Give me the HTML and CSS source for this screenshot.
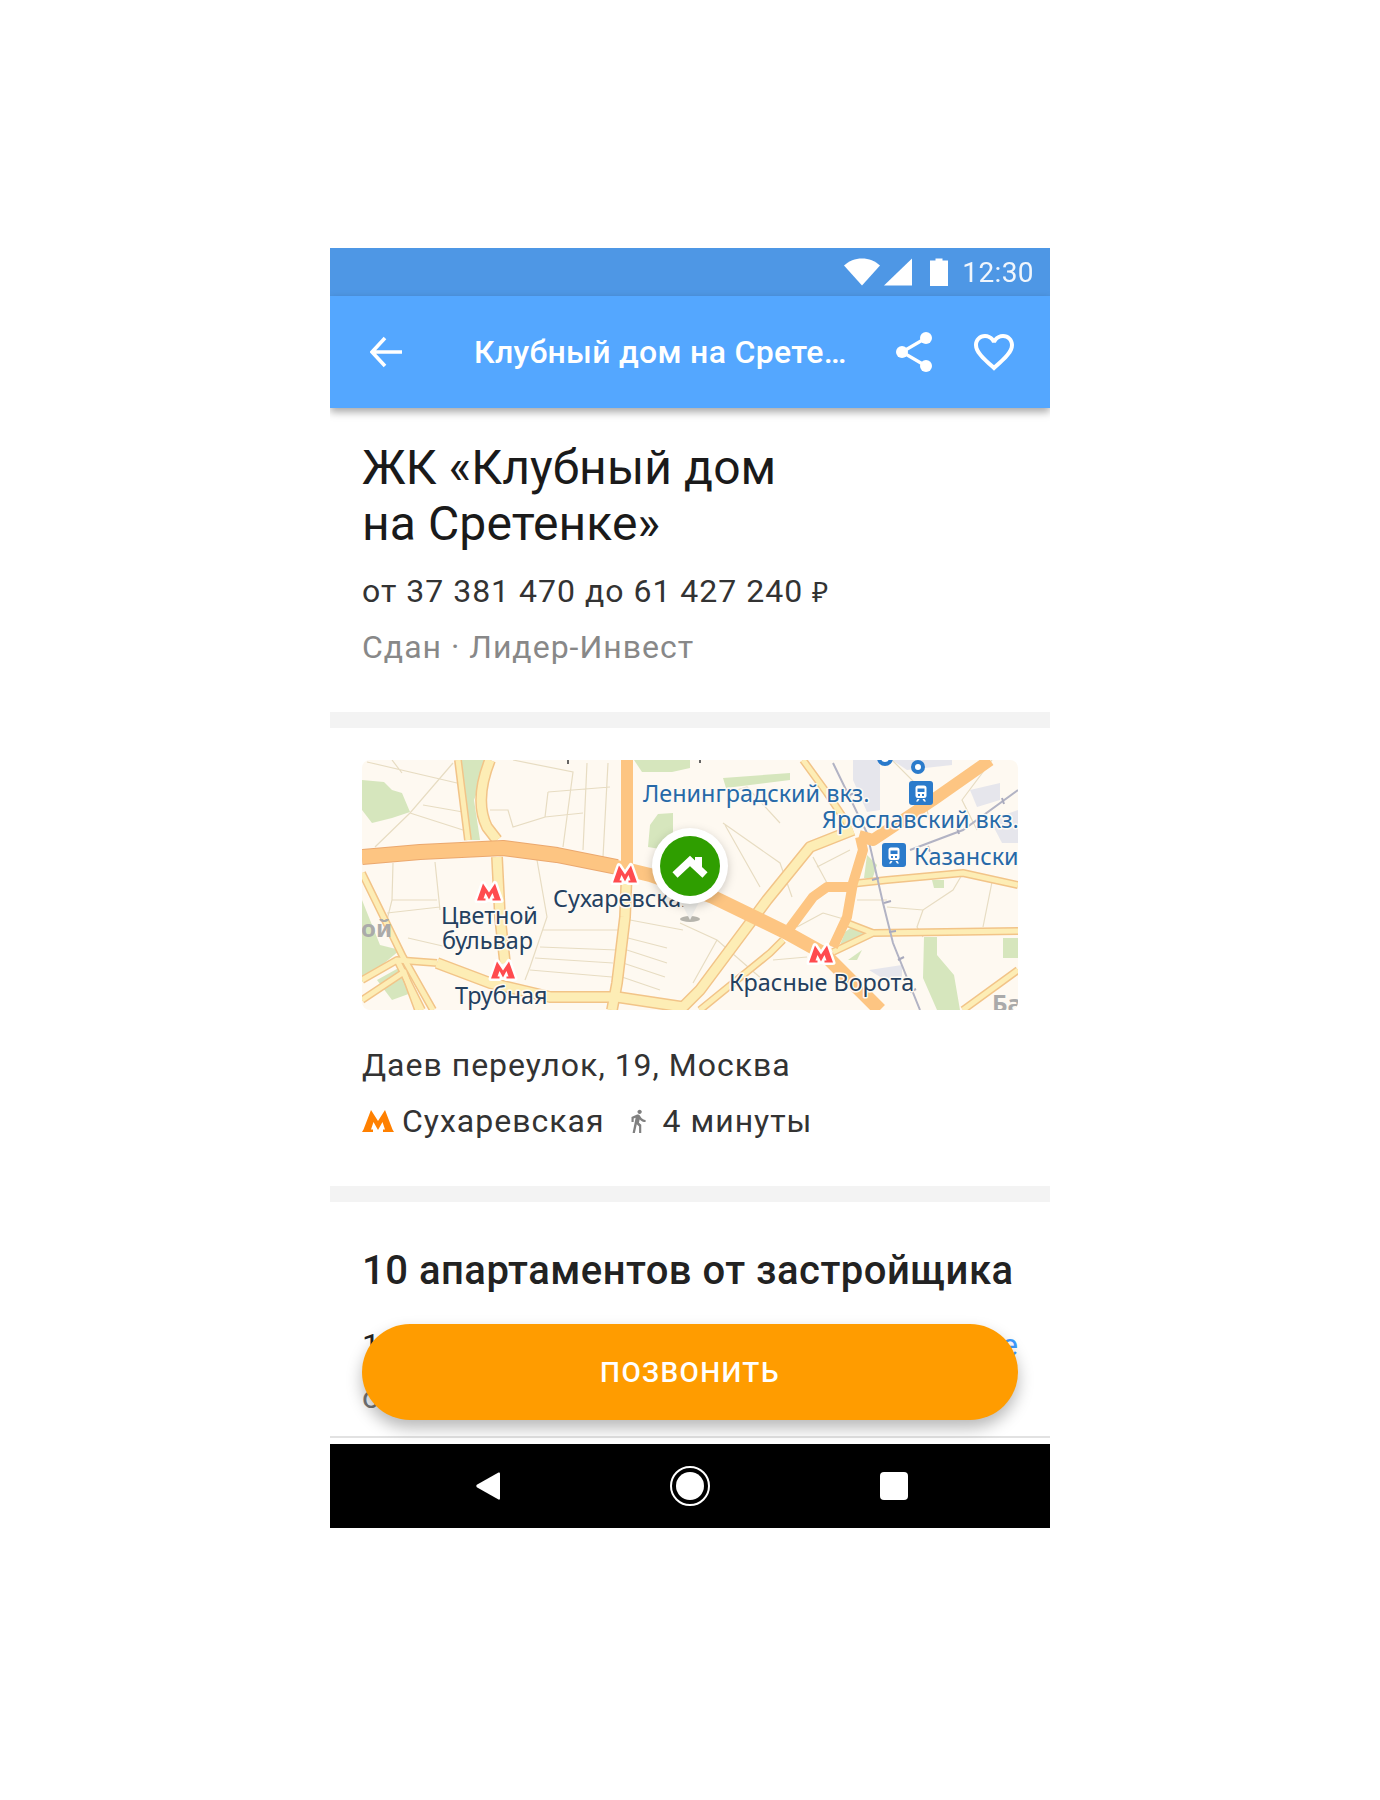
FILE: index.html
```html
<!DOCTYPE html>
<html lang="ru">
<head>
<meta charset="utf-8">
<title>ЖК «Клубный дом на Сретенке»</title>
<link rel="stylesheet" href="styles.css">
</head>
<body>
<div class="phone">
  <div class="status">
    <svg class="st-wifi" width="36" height="28" viewBox="0 0 36 28"><path d="M0 7.500C5 3 11 .5 18 .5S31 3 36 7.500L18 27.500z"/></svg>
    <svg class="st-signal" width="28" height="28" viewBox="0 0 28 28"><path d="M28 0.500V27.500H0z"/></svg>
    <svg class="st-batt" width="18" height="28" viewBox="0 0 18 28"><path d="M0 2.500h5.500V.5h7v2H18v25.500H0z"/></svg>
    <span class="st-time">12:30</span>
  </div>
  <header class="appbar">
    <svg class="ab-back" width="32" height="32" viewBox="0 0 32 32"><path d="M32 16H2M15 2L2 16l13 14" fill="none" stroke="#fff" stroke-width="3.600"/></svg>
    <div class="ab-title">Клубный дом на Срете…</div>
    <svg class="ab-share" width="36" height="40" viewBox="0 0 36 40"><g fill="#fff"><circle cx="30" cy="6" r="6"/><circle cx="6" cy="20" r="6"/><circle cx="30" cy="34" r="6"/></g><path d="M30 6L6 20l24 14" fill="none" stroke="#fff" stroke-width="3.200"/></svg>
    <svg class="ab-heart" width="48" height="48" viewBox="0 0 24 24"><path fill="#fff" d="M16.500 3c-1.740 0-3.410.81-4.500 2.090C10.910 3.810 9.240 3 7.500 3 4.420 3 2 5.420 2 8.500c0 3.780 3.400 6.860 8.550 11.540L12 21.350l1.450-1.320C18.600 15.360 22 12.280 22 8.500 22 5.420 19.580 3 16.500 3zm-4.400 15.550l-.1.100-.1-.1C7.140 14.240 4 11.390 4 8.500 4 6.500 5.500 5 7.500 5c1.540 0 3.040.99 3.570 2.360h1.870C13.460 5.990 14.960 5 16.500 5c2 0 3.500 1.500 3.500 3.500 0 2.890-3.140 5.740-7.900 10.050z"/></svg>
  </header>
  <main class="content">
    <section class="head">
      <h1 class="title">ЖК «Клубный дом<br>на Сретенке»</h1>
      <div class="price">от 37 381 470 до 61 427 240 <span class="rub">₽</span></div>
      <div class="sub">Сдан · Лидер-Инвест</div>
    </section>
    <section class="loc">
      <svg class="map" width="656" height="250" viewBox="0 0 656 250">
        <defs>
          <g id="m"><path d="M-12 8.500L-6 -8.500L0 0.500L6 -8.500L12 8.500H3.500V6.500H5.500L3.500 1L0 7.500L-3.500 1L-5.500 6.500H-3.500V8.500z"/></g>
          <g id="train"><rect x="0" y="0" width="24" height="24" rx="3"/><path class="tr" d="M6.500 15V7q0-2.500 2.500-2.500h6q2.500 0 2.500 2.500v8q0 2-2.500 2H9q-2.500 0-2.500-2zM8.500 7.500v3.500h7V7.500zM9 13h2v2H9zM13 13h2v2h-2zM8.500 18h2l-1.500 2.500H7zM15.500 18h-2l1.500 2.500H17z"/></g>
          <g id="y10"><path d="M128 0Q112 40 125 67L135 80"/><path d="M135 97L138 157L143 203"/><path d="M265 107L263 157L255 223L250 250"/><path d="M491 70L448 87L405 140L385 167L338 230L318 250"/><path d="M75 203L128 223L188 237L255 237L321 247"/></g>
          <g id="y6"><path d="M96 0L106 80"/><path d="M0 113L41 197L71 250"/><path d="M0 220L35 200L75 203"/><path d="M0 240L42 212L56 250"/><path d="M488 124L525 120L601 113L656 125"/><path d="M471 192L511 173L656 171"/><path d="M485 163L511 173"/><path d="M441 0L465 33L487 66"/><path d="M601 250L656 210"/><path d="M421 180L408 193L338 250"/><path d="M35 200L60 250"/></g>
        </defs>
        <rect class="bg" width="656" height="250"/>
        <g class="green">
          <path d="M0 20L22 22L30 30L40 33L48 52L30 58L10 63L0 50z"/>
          <path d="M98 0H128L112 40L118 80H106z"/>
          <path d="M272 0H328V8L310 12H280z"/>
          <path d="M296 54L311 53L311 75L304 90L286 87L288 65z"/>
          <path d="M361 18L428 13V20L364 28z"/>
          <path d="M562 177H575V195L592 215L598 250H575L561 218z"/>
          <path d="M641 178H656V198H641z"/>
          <path d="M570 120H582V128H572z"/>
          <path d="M486 200L500 190L495 200z"/>
          <path d="M483 172L490 167L505 175L478 185z"/>
          <path d="M505 95L515 105L510 120L502 118z"/>
          <path d="M0 140L18 185L38 190L8 215L0 222z"/>
          <path d="M15 220L42 205L52 232L30 240z"/>
          <path d="M138 195L143 195L144 203L138 202z"/>
        </g>
        <g class="bld">
          <path d="M491 0H518L518 50L505 52L491 20z"/>
          <path d="M608 30L638 23V40L615 47z"/>
          <path d="M628 60L656 50V83H640z"/>
          <path d="M507 210L540 205V218H520z"/>
          <path d="M530 0H590V5L545 10z"/>
        </g>
        <path class="st" d="M5 2L95 23M40 13L30 0M91 3L48 53L13 87M48 53L101 70M61 45L101 52M151 0L211 12L201 87M225 3L221 90M246 3L241 97M186 32L248 27M186 32L183 57L151 67L146 50L128 50M183 57L221 53M31 103L30 140L25 160M73 102L78 150M30 140L75 140M25 153L78 147M46 178L85 187M175 100L185 157L168 207L163 220M181 170L258 170M178 187L255 190M173 198L251 203M168 210L250 217M268 160L321 170M266 178L305 188M265 190L305 203M261 203L303 217M260 217L298 230M363 65L398 127M365 33L385 27L418 63M361 63L418 103L430 137M455 107L488 90M451 97L465 123M525 147L561 150L591 130L601 113M495 140L525 140M631 117L621 167M561 177L555 167L561 150M461 153L485 160M461 153L435 167M411 200L445 197M318 163L355 180L401 220M355 180L331 223M530 0L560 30L570 70M318 30L345 40M630 0L600 40L615 70"/>
        <use href="#y10" class="case10"/>
        <use href="#y6" class="case6"/>
        <use href="#y10" class="fill10"/>
        <use href="#y6" class="fill6"/>
        <path class="rail" d="M471 3L505 73L521 143L531 183L558 250M548 90L601 70L656 30"/>
        <path class="tick" d="M488 35l6-3M500 62l6-3M510 120l7-2M522 143l7-2M527 172l7-1M536 200l6-3M548 232l6-3M566 86l2 6M595 68l2 6M640 38l2 6"/>
        <path class="ring-edge" d="M0 97L58 92L141 88L195 95L255 107"/>
        <path class="ring" d="M0 97L58 92L141 88L195 95L255 107L288 115L351 137L425 173L461 193L491 223L518 250"/>
        <path class="or12" d="M265 0V107M628 0L571 40L511 80L497 76"/>
        <path class="or10" d="M498 77L501 90L491 123L485 157L471 187M488 127H465L451 137L428 168"/>
        <path class="tick-dark" d="M206 0v4M338 0v3"/>
        <circle class="ring-blue" cx="556" cy="7" r="5"/>
        <circle class="ring-blue" cx="523" cy="-2" r="6"/>
        <use href="#train" class="train" x="547" y="21"/>
        <use href="#train" class="train" x="520" y="83"/>
        <use href="#m" class="metro" x="127" y="132"/>
        <use href="#m" class="metro" x="263" y="114"/>
        <use href="#m" class="metro" x="141" y="210"/>
        <use href="#m" class="metro" x="459" y="194"/>
        <g class="lbl-dark">
          <text x="79" y="164">Цветной</text>
          <text x="80" y="189">бульвар</text>
          <text x="93" y="244">Трубная</text>
          <text x="191" y="147">Сухаревская</text>
          <text x="367" y="231">Красные Ворота</text>
        </g>
        <g class="lbl-blue">
          <text x="281" y="42">Ленинградский вкз.</text>
          <text x="460" y="68">Ярославский вкз.</text>
          <text x="552" y="105">Казански</text>
        </g>
        <g class="lbl-gray">
          <text x="-1" y="177">ой</text>
          <text x="630" y="252">Ба</text>
        </g>
        <path class="pin-shadow" d="M318 159a10 3 0 1 0 20 0a10 3 0 1 0-20 0z"/>
        <path class="pin-tail" d="M318 140L328 160L338 140z"/>
        <circle class="pin-white pin-disc" cx="328" cy="106" r="38"/>
        <circle class="pin-green" cx="328" cy="106" r="30"/>
        <path class="pin-house" d="M333 97h7v12h-7z"/>
        <path class="pin-roof" d="M313 115L328 101L343 115"/>
      </svg>
      <div class="addr">Даев переулок, 19, Москва</div>
      <div class="metro-row">
        <svg class="ic-m" width="32" height="22" viewBox="0 0 32 22"><path d="M0 22L1.500 19.500L9 0L16 11L23 0L30.500 19.500L32 22H21V19.500H23L20.500 12L16 20L11.500 12L9 19.500H11V22z"/></svg>
        <span class="metro-name">Сухаревская</span>
        <svg class="ic-walk" width="26" height="26" viewBox="0 0 24 24"><path d="M13.500 5.500c1.100 0 2-.9 2-2s-.9-2-2-2-2 .9-2 2 .9 2 2 2zM9.800 8.900L7 23h2.100l1.800-8 2.100 2v6h2v-7.500l-2.100-2 .6-3C14.800 12 16.800 13 19 13v-2c-1.900 0-3.500-1-4.300-2.400l-1-1.600c-.4-.6-1-1-1.700-1-.3 0-.5.1-.8.1L6 8.300V13h2V9.600l1.800-.7"/></svg>
        <span class="metro-time">4 минуты</span>
      </div>
    </section>
    <section class="offers">
      <h2 class="offers-title">10 апартаментов от застройщика</h2>
      <div class="offer-row">
        <span class="offer-name">1-комнатные</span>
        <span class="offer-link">Смотреть все</span>
      </div>
      <div class="offer-price">от 37 381 470 ₽</div>
    </section>
  </main>
  <div class="strip"></div>
  <button class="call">позвонить</button>
  <nav class="navbar">
    <svg width="24" height="28" viewBox="0 0 24 28"><path d="M22.500 0.500q1.500-.5 1.500 1V26.500q0 1.500-1.500 1L.8 15.200q-1-1.200 0-2.400z"/></svg>
    <svg width="40" height="40" viewBox="0 0 40 40"><circle class="nav-ring" cx="20" cy="20" r="19"/><circle cx="20" cy="20" r="14"/></svg>
    <svg width="28" height="28" viewBox="0 0 28 28"><rect width="28" height="28" rx="4"/></svg>
  </nav>
</div>
</body>
</html>
```
FILE: styles.css
```css
* { box-sizing: border-box; }
html, body { margin: 0; padding: 0; background: #fff; }
body { height: 1800px; padding-top: 248px; font-family: Roboto, "Noto Sans", sans-serif; }

.phone { position: relative; width: 720px; height: 1280px; margin: 0 auto; display: flex; flex-direction: column; background: #fff; overflow: hidden; }

.status { height: 48px; flex: none; background: #4e97e5; display: flex; align-items: center; padding: 0 16px 0 0; justify-content: flex-end; color: #fff; }
.status svg { fill: #fff; flex: none; }
.st-wifi { margin-right: 4px; }
.st-signal { margin-right: 18px; }
.st-batt { margin-right: 14px; }
.st-time { font-size: 28px; letter-spacing: 0.4px; opacity: .92; }

.appbar { height: 112px; flex: none; background: #54a7ff; display: flex; align-items: center; padding: 0 0 0 40px; color: #fff; box-shadow: 0 4px 8px rgba(0,0,0,.35); position: relative; z-index: 2; }
.ab-back { flex: none; }
.ab-title { margin-left: 72px; width: 392px; flex: none; font-size: 32px; font-weight: 500; white-space: nowrap; letter-spacing: .3px; }
.ab-share { flex: none; margin-left: 30px; }
.ab-heart { flex: none; margin-left: 38px; }

.content { flex: 1; min-height: 0; overflow: hidden; }
.head { padding: 32px 32px 45px; border-bottom: 16px solid #f3f3f3; }
.title { margin: 0; font-size: 48px; font-weight: 400; line-height: 56px; color: #1a1a1a; letter-spacing: .1px; }
.price { margin-top: 19px; font-size: 32px; line-height: 40px; color: #333; letter-spacing: 1px; }
.rub { font-family: "Noto Sans", sans-serif; font-size: 28px; }
.sub { margin-top: 16px; font-size: 32px; line-height: 40px; color: #888; letter-spacing: 1px; }

.loc { padding: 32px 32px 0; height: 474px; border-bottom: 16px solid #f3f3f3; }
.map { display: block; border-radius: 8px; }
.addr { margin-top: 35px; font-size: 32px; line-height: 40px; color: #333; letter-spacing: 1px; }
.metro-row { margin-top: 16px; height: 40px; display: flex; align-items: center; font-size: 32px; color: #333; letter-spacing: 1px; }
.ic-m { fill: #ff8000; flex: none; margin-right: 8px; }
.ic-walk { fill: #808080; flex: none; margin: 0 12px 0 20px; }

.offers { padding: 45px 32px 0; }
.offers-title { margin: 0; font-size: 40px; line-height: 48px; font-weight: 500; color: #222; letter-spacing: .5px; white-space: nowrap; }
.offer-row { margin-top: 30px; display: flex; justify-content: space-between; font-size: 32px; line-height: 40px; color: #222; }
.offer-link { color: #3d9bff; }
.offer-price { margin-top: 12px; font-size: 32px; line-height: 40px; color: #777; }

.strip { height: 8px; flex: none; border-top: 2px solid #e2e2e2; background: #fff; }

.call { position: absolute; left: 32px; right: 32px; bottom: 108px; height: 96px; border: 0; border-radius: 48px; background: #ff9c00; color: #fff; font-family: Roboto, sans-serif; font-size: 28px; font-weight: 500; letter-spacing: 1.4px; text-transform: uppercase; box-shadow: 0 8px 16px rgba(0,0,0,.28); }

.navbar { height: 84px; flex: none; background: #000; display: flex; align-items: center; justify-content: center; gap: 170px; padding-left: 4px; }
.navbar svg { fill: #fff; flex: none; }
.nav-ring { fill: none; stroke: #fff; stroke-width: 2; }

/* map */
.bg { fill: #fef9f1; }
.green { fill: #d6e6bd; }
.bld { fill: #e6e6ec; }
.st { fill: none; stroke: #e7dcc2; stroke-width: 1.2; }
.case10, .case6, .fill10, .fill6 { fill: none; stroke-linejoin: round; }
.case10 { stroke: #f2c488; stroke-width: 12; }
.fill10 { stroke: #fdedb5; stroke-width: 9; }
.case6 { stroke: #f2c488; stroke-width: 8; }
.fill6 { stroke: #fdedb5; stroke-width: 5; }
.rail { fill: none; stroke: #b2b3c4; stroke-width: 2; }
.tick { fill: none; stroke: #a9aabd; stroke-width: 2; }
.ring { fill: none; stroke: #fdc582; stroke-width: 14; stroke-linejoin: round; }
.ring-edge { fill: none; stroke: #eba86e; stroke-width: 16; stroke-linejoin: round; }
.or12 { fill: none; stroke: #fdc582; stroke-width: 12; stroke-linejoin: round; }
.or10 { fill: none; stroke: #fdc582; stroke-width: 10; stroke-linejoin: round; }
.tick-dark { fill: none; stroke: #333; stroke-width: 1.5; }
.ring-blue { fill: #fff; stroke: #2b7bcb; stroke-width: 4; }
.train { fill: #2b7bcb; }
.tr { fill: #fff; fill-rule: evenodd; }
.metro { fill: #ff4b4f; stroke: #fff; stroke-width: 5; stroke-linejoin: round; paint-order: stroke; }
.lbl-dark text, .lbl-blue text, .lbl-gray text { font-family: "Noto Sans", sans-serif; font-size: 23.400px; stroke: #fdfaf4; stroke-width: 3; stroke-linejoin: round; paint-order: stroke; }
.lbl-dark text { fill: #24405f; }
.lbl-blue text { fill: #2669a8; }
.lbl-gray text { fill: #aaa; font-weight: 700; font-size: 24px; stroke: none; }
.pin-shadow { fill: #b6b4ac; }
.pin-tail { fill: #f1f0ec; }
.pin-white { fill: #fff; }
.pin-disc { filter: drop-shadow(0 3px 5px rgba(0,0,0,.2)); }
.pin-green { fill: #2f9e00; }
.pin-house { fill: #fff; }
.pin-roof { fill: none; stroke: #fff; stroke-width: 7.500; }
```
